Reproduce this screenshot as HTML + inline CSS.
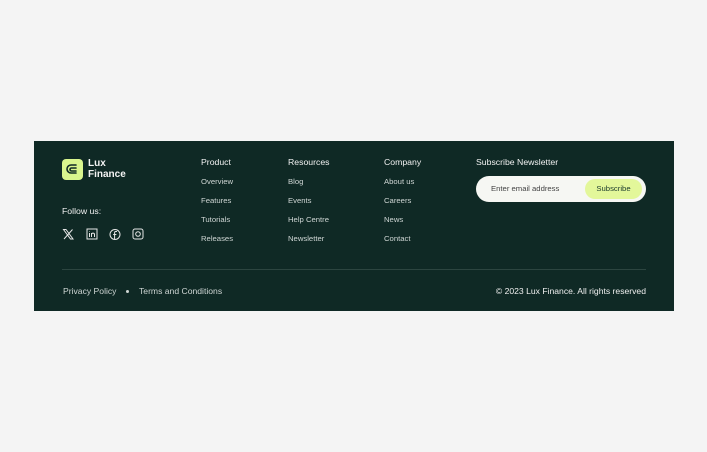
<!DOCTYPE html>
<html><head><style>
*{margin:0;padding:0;box-sizing:border-box}
body{width:707px;height:452px;background:#f4f4f4;font-family:"Liberation Sans",sans-serif;position:relative;overflow:hidden}
.f{position:absolute;left:34px;top:141px;width:640px;height:170px;background:#0f2925;color:#fff}
.a{position:absolute;white-space:nowrap}
.h{font-size:8.7px;color:#f2f2f2}
.l{font-size:7.7px;color:#cfd6d4}
</style></head><body>
<div class="f">
 <div class="a" style="left:28px;top:18px;width:21px;height:21px;background:#d9f58e;border-radius:4px">
  <svg width="21" height="21" viewBox="0 0 21 21"><path d="M14 6H9a4 4 0 0 0 0 8h5M14 9H9.5a1.5 1.5 0 0 0 0 3H14" fill="none" stroke="#0f2925" stroke-width="1.6" stroke-linecap="round"/></svg>
 </div>
 <div class="a" style="left:54px;top:18px;font-size:10px;line-height:10.5px;font-weight:bold;color:#f4f4f4">Lux<br>Finance</div>
 <div class="a h" style="left:28px;top:65px">Follow us:</div>
 <svg class="a" style="left:28px;top:87px" width="120" height="13" viewBox="0 0 120 13" fill="none" stroke="#e6e6e6" stroke-width="1">
  <path d="M1.5 1.5h2.5l7 9.5H8.5zM10.5 1.5L2 11"/>
  <rect x="25" y="1" width="10" height="10"/><path d="M27.5 5v4M27.5 3.3v.5M29.5 9V5M29.5 6.5c0-1.8 3-1.8 3 0V9"/>
  <circle cx="53" cy="6.5" r="5"/><path d="M55 3.5h-1.2c-.8 0-1.2.5-1.2 1.2V11M51.2 6.5h3.2"/>
  <rect x="71" y="1" width="10" height="10" rx="2"/><circle cx="76" cy="6" r="2.3"/>
 </svg>
 <div class="a h" style="left:167px;top:16px">Product</div>
 <div class="a l" style="left:167px;top:36px">Overview</div>
 <div class="a l" style="left:167px;top:55px">Features</div>
 <div class="a l" style="left:167px;top:74px">Tutorials</div>
 <div class="a l" style="left:167px;top:93px">Releases</div>
 <div class="a h" style="left:254px;top:16px">Resources</div>
 <div class="a l" style="left:254px;top:36px">Blog</div>
 <div class="a l" style="left:254px;top:55px">Events</div>
 <div class="a l" style="left:254px;top:74px">Help Centre</div>
 <div class="a l" style="left:254px;top:93px">Newsletter</div>
 <div class="a h" style="left:350px;top:16px">Company</div>
 <div class="a l" style="left:350px;top:36px">About us</div>
 <div class="a l" style="left:350px;top:55px">Careers</div>
 <div class="a l" style="left:350px;top:74px">News</div>
 <div class="a l" style="left:350px;top:93px">Contact</div>
 <div class="a h" style="left:442px;top:16px">Subscribe Newsletter</div>
 <div class="a" style="left:442px;top:35px;width:170px;height:26px;background:#f6f7f3;border-radius:13px">
  <div class="a" style="left:15px;top:8px;font-size:7.7px;color:#444">Enter email address</div>
  <div class="a" style="left:109px;top:3px;width:57px;height:20px;background:#e3f79a;border-radius:10px;font-size:7.7px;color:#1a3a2c;text-align:center;line-height:20px">Subscribe</div>
 </div>
 <div class="a" style="left:28px;top:128px;width:584px;height:1px;background:#2c4540"></div>
 <div class="a l" style="left:29px;top:145px;font-size:8.6px">Privacy Policy</div>
 <div class="a" style="left:92px;top:149px;width:3px;height:3px;border-radius:50%;background:#cfd6d4"></div>
 <div class="a l" style="left:105px;top:145px;font-size:8.6px">Terms and Conditions</div>
 <div class="a" style="right:28px;top:145px;font-size:8.6px;color:#f0f0f0">© 2023 Lux Finance. All rights reserved</div>
</div>
</body></html>
